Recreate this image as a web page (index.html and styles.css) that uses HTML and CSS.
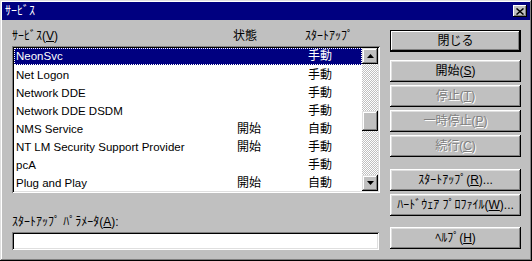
FILE: index.html
```html
<!DOCTYPE html>
<html lang="ja">
<head>
    <meta charset="UTF-8">
    <title>サービス</title>
    <link rel="stylesheet" href="styles.css">
</head>
<body>
    <div class="window">
        <div class="titlebar">
            <span class="title">ｻｰﾋﾞｽ</span>
            <div class="close-btn">
                <svg width="8" height="7" viewBox="0 0 8 7"><path d="M0.5 0.5 L7.5 6.5 M7.5 0.5 L0.5 6.5" stroke="#000" stroke-width="1.5" fill="none"/></svg>
            </div>
        </div>

        <div class="main">
            <div class="left">
                <div class="list-head">
                    <span>ｻｰﾋﾞｽ(<u>V</u>)</span>
                    <span>状態</span>
                    <span>ｽﾀｰﾄｱｯﾌﾟ</span>
                </div>

                <div class="listbox">
                    <div class="rows">
                        <div class="row selected"><span>NeonSvc</span><span></span><span>手動</span></div>
                        <div class="row"><span>Net Logon</span><span></span><span>手動</span></div>
                        <div class="row"><span>Network DDE</span><span></span><span>手動</span></div>
                        <div class="row"><span>Network DDE DSDM</span><span></span><span>手動</span></div>
                        <div class="row"><span>NMS Service</span><span>開始</span><span>自動</span></div>
                        <div class="row"><span>NT LM Security Support Provider</span><span>開始</span><span>手動</span></div>
                        <div class="row"><span>pcA</span><span></span><span>手動</span></div>
                        <div class="row"><span>Plug and Play</span><span>開始</span><span>自動</span></div>
                    </div>
                    <div class="scrollbar">
                        <div class="sb-btn">
                            <svg width="7" height="4" viewBox="0 0 7 4"><path d="M3.5 0 L7 4 L0 4 Z" fill="#000"/></svg>
                        </div>
                        <div class="sb-track">
                            <div class="sb-thumb"></div>
                        </div>
                        <div class="sb-btn">
                            <svg width="7" height="4" viewBox="0 0 7 4"><path d="M0 0 L7 0 L3.5 4 Z" fill="#000"/></svg>
                        </div>
                    </div>
                </div>

                <div class="param-label">ｽﾀｰﾄｱｯﾌﾟ ﾊﾟﾗﾒｰﾀ(<u>A</u>):</div>
                <div class="param-input"></div>
            </div>

            <div class="buttons">
                <div class="btn default">閉じる</div>
                <div class="btn first">開始(<u>S</u>)</div>
                <div class="btn disabled">停止(<u>T</u>)</div>
                <div class="btn disabled">一時停止(<u>P</u>)</div>
                <div class="btn disabled">続行(<u>C</u>)</div>
                <div class="btn group">ｽﾀｰﾄｱｯﾌﾟ(<u>R</u>)...</div>
                <div class="btn">ﾊｰﾄﾞｳｪｱ ﾌﾟﾛﾌｧｲﾙ(<u>W</u>)...</div>
                <div class="btn help">ﾍﾙﾌﾟ(<u>H</u>)</div>
            </div>
        </div>
    </div>
</body>
</html>
```

FILE: styles.css
```css
body {
  margin: 0;
  background: #c0c0c0;
  font-family: "Liberation Sans", "Noto Sans CJK JP", sans-serif;
  font-size: 12px;
  color: #000;
}

u {
  text-decoration: underline;
  text-underline-offset: 1px;
}

.window {
  width: 532px;
  height: 261px;
  box-sizing: border-box;
  padding: 2px;
  background: #c0c0c0;
  box-shadow: inset -1px -1px #000, inset 1px 1px #dfdfdf,
    inset -2px -2px #808080, inset 2px 2px #fff;
}

/* title bar */
.titlebar {
  height: 18px;
  background: #000080;
  color: #fff;
  display: flex;
  align-items: center;
  justify-content: space-between;
  padding: 0 3px 0 3px;
}

.title {
  font-size: 12px;
  line-height: 18px;
}

.close-btn {
  width: 14px;
  height: 12px;
  background: #c0c0c0;
  display: flex;
  align-items: center;
  justify-content: center;
  box-shadow: inset -1px -1px #000, inset 1px 1px #fff, inset -2px -2px #808080;
}

/* main area */
.main {
  display: flex;
  gap: 10px;
  padding: 8px 0 0 10px;
}

.left {
  width: 368px;
}

.list-head {
  display: grid;
  grid-template-columns: 221px 72px 1fr;
  height: 16px;
  line-height: 16px;
}

.listbox {
  margin-top: 2px;
  height: 147px;
  box-sizing: border-box;
  padding: 2px;
  display: flex;
  background: #fff;
  box-shadow: inset 1px 1px #808080, inset -1px -1px #fff,
    inset 2px 2px #000, inset -2px -2px #dfdfdf;
}

.rows {
  flex: 1;
  overflow: hidden;
  font-size: 11.5px;
}

.row {
  display: grid;
  grid-template-columns: 221px 71px 1fr;
  height: 18px;
  line-height: 18px;
  padding-left: 2px;
  white-space: nowrap;
}

.row span:nth-child(n+2) {
  font-size: 12px;
}

.row.selected {
  background: #000080;
  color: #fff;
  height: 17px;
  line-height: 17px;
  margin-bottom: 1px;
  outline: 1px dotted #fff;
  outline-offset: -1px;
}

/* scrollbar */
.scrollbar {
  width: 16px;
  display: flex;
  flex-direction: column;
}

.sb-btn {
  height: 16px;
  background: #c0c0c0;
  display: flex;
  align-items: center;
  justify-content: center;
  box-shadow: inset -1px -1px #000, inset 1px 1px #dfdfdf,
    inset -2px -2px #808080, inset 2px 2px #fff;
}

.sb-track {
  flex: 1;
  background: repeating-conic-gradient(#c0c0c0 0 25%, #fff 0 50%) 0 0 / 2px 2px;
}

.sb-thumb {
  height: 20px;
  margin-top: 47px;
  background: #c0c0c0;
  box-shadow: inset -1px -1px #000, inset 1px 1px #dfdfdf,
    inset -2px -2px #808080, inset 2px 2px #fff;
}

/* parameters */
.param-label {
  margin-top: 22px;
  height: 15px;
  line-height: 15px;
}

.param-input {
  margin-top: 2px;
  height: 18px;
  width: 367px;
  background: #fff;
  box-shadow: inset 1px 1px #808080, inset -1px -1px #fff,
    inset 2px 2px #000, inset -2px -2px #dfdfdf;
}

/* buttons */
.buttons {
  width: 131px;
  padding-top: 2px;
  display: flex;
  flex-direction: column;
  gap: 3px;
}

.btn {
  height: 22px;
  line-height: 22px;
  text-align: center;
  background: #c0c0c0;
  box-shadow: inset -1px -1px #000, inset 1px 1px #fff,
    inset -2px -2px #808080, inset 2px 2px #dfdfdf;
}

.btn.default {
  box-shadow: inset 0 0 0 1px #000, inset -2px -2px #000, inset 2px 2px #fff,
    inset -3px -3px #808080;
}

.btn.first {
  margin-top: 5px;
}

.btn.disabled {
  color: #808080;
  text-shadow: 1px 1px #fff;
}

.btn.group {
  margin-top: 9px;
}

.btn.help {
  margin-top: 8px;
}
```
